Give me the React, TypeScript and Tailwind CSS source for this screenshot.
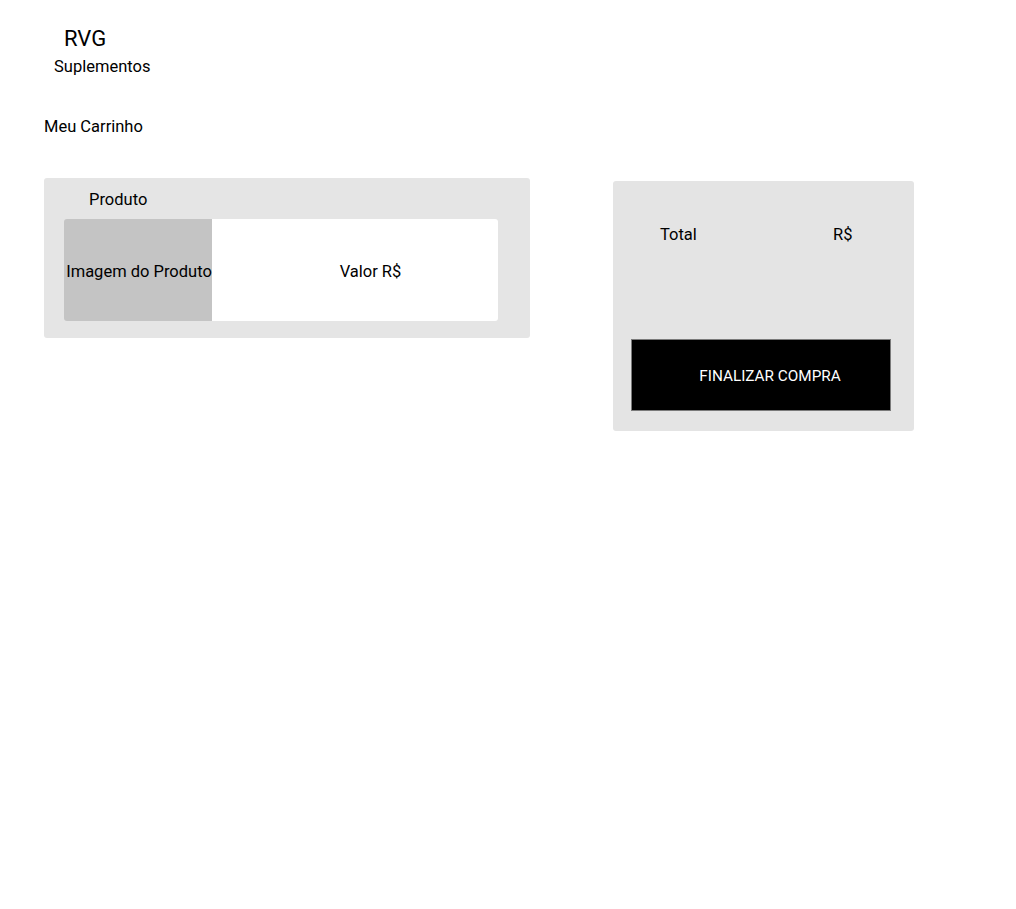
export default function App() {
  return (
    <div className="min-h-screen bg-white px-[44px] pt-[25px] text-black" style={{ fontFamily: "Roboto, 'Liberation Sans', sans-serif" }}>
      <header className="flex flex-col">
        <h1 className="ml-[20px] text-[22px] leading-[28px]">RVG</h1>
        <p className="ml-[10px] mt-[2px] text-[16.5px] leading-[24px]">Suplementos</p>
      </header>

      <h2 className="mt-[36px] text-[16.5px] leading-[24px]">Meu Carrinho</h2>

      <div className="mt-[39px] flex items-start">
        <section className="w-[486px] rounded-[3px] bg-[#e5e5e5] pb-[17px] pl-[20px] pt-[10px]">
          <p className="pl-[25px] text-[16.5px] leading-[24px]">Produto</p>
          <div className="mt-[7px] flex h-[102px] w-[434px]">
            <div className="flex w-[148px] items-center justify-center whitespace-nowrap rounded-l-[3px] bg-[#c4c4c4] pl-[2px] pt-[3px] text-[16.5px] leading-[24px]">
              Imagem do Produto
            </div>
            <div className="flex flex-1 items-center justify-center rounded-r-[3px] bg-white pl-[31px] pt-[3px] text-[16.5px] leading-[24px]">
              Valor R$
            </div>
          </div>
        </section>

        <section className="ml-[83px] mt-[3px] w-[301px] rounded-[3px] bg-[#e4e4e4] pb-[20px] pt-[42px]">
          <div className="flex pl-[47px] text-[16.5px] leading-[24px]">
            <span className="w-[173px]">Total</span>
            <span>R$</span>
          </div>
          <button className="ml-[18px] mt-[92px] flex h-[72px] w-[260px] items-center justify-center border border-[#7a7a7a] bg-black pl-[18px] pt-[2px] text-[15.3px] leading-[20px] text-white">
            FINALIZAR COMPRA
          </button>
        </section>
      </div>
    </div>
  );
}
